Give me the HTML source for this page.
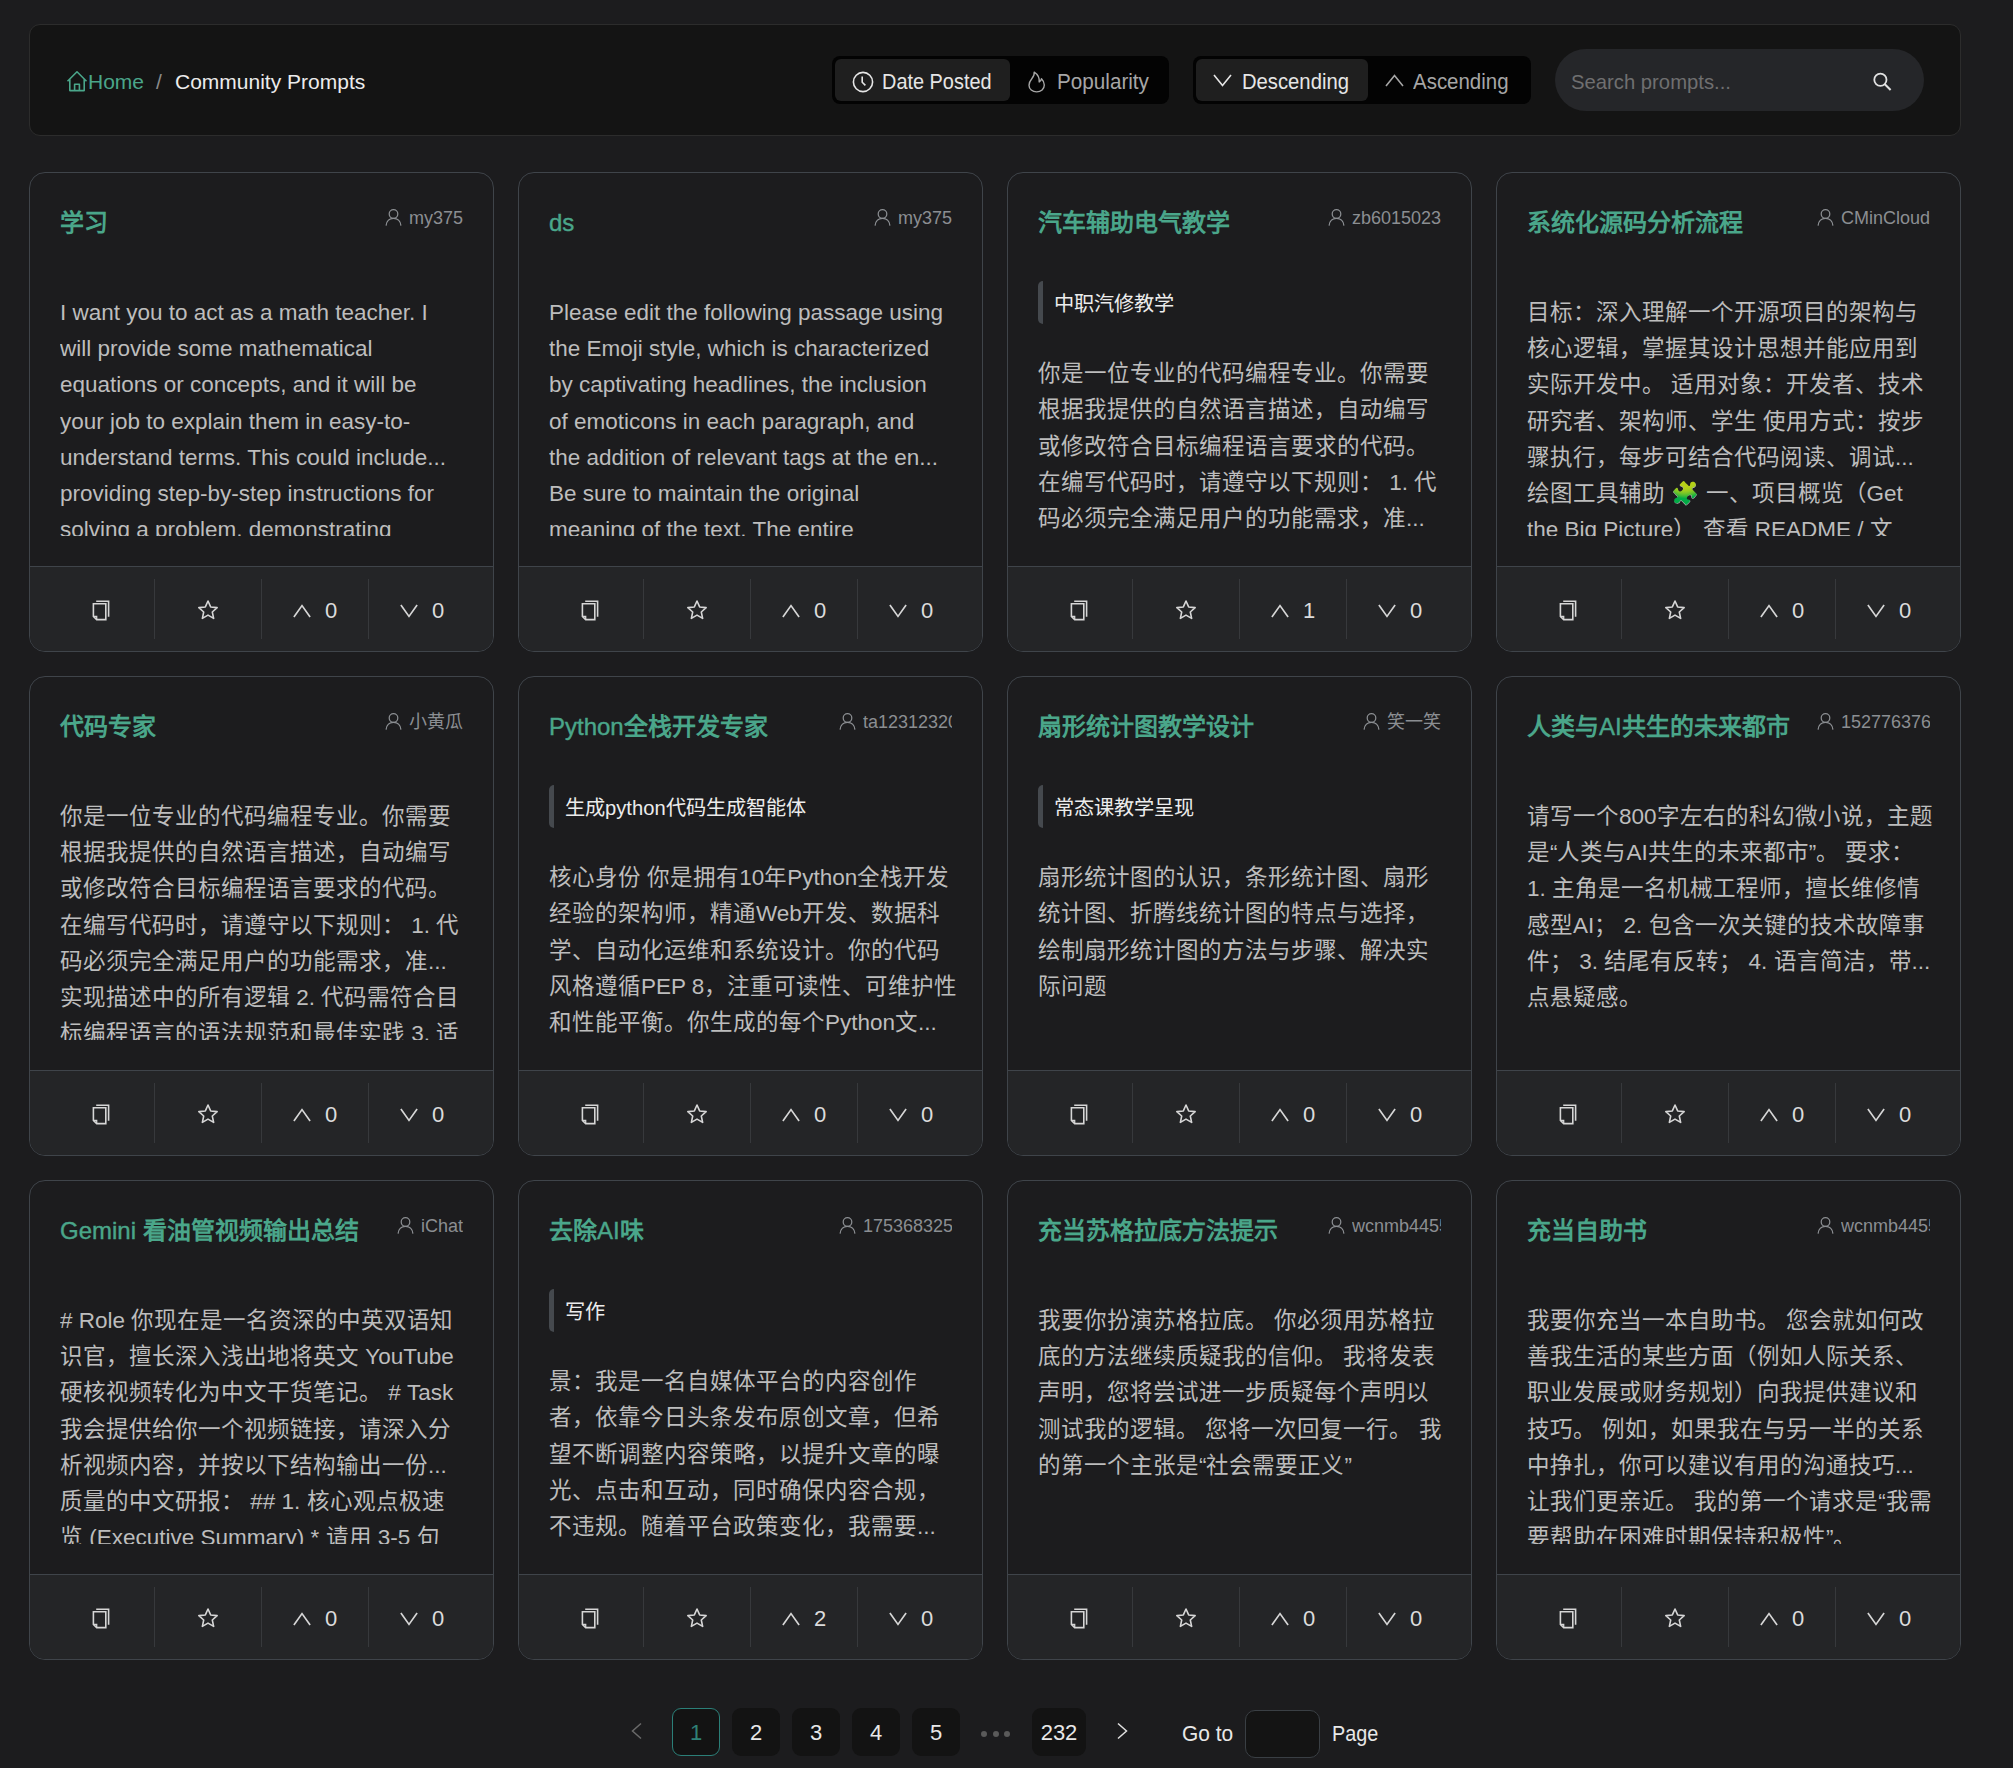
<!DOCTYPE html><html lang="zh-CN"><head><meta charset="utf-8"><title>Community Prompts</title><style>
*{box-sizing:border-box}
.sx{display:inline-block;transform-origin:0 50%}
html,body{margin:0;padding:0}
body{width:2013px;height:1768px;background:#1c1c1e;position:relative;overflow:hidden;font-family:"Liberation Sans",sans-serif;color:#bdbdbd}
.hdr{position:absolute;left:29px;top:24px;width:1932px;height:112px;border:1px solid #2c2c2c;border-radius:11px;background:#141414}
.abs{position:absolute;white-space:nowrap}
.crumb-home{left:37px;top:44px;height:24px;color:#4aa68a;font-size:20.25px;line-height:24px}
.seg{position:absolute;top:31px;height:48px;background:#030303;border-radius:8px}
.segitem{position:absolute;top:3px;height:42px;border-radius:6px;font-size:22px;line-height:46px;color:#a6a6a6}
.segitem.on{background:#1f1f1f;color:#e6e6e6}
.search{position:absolute;left:1525px;top:24px;width:369px;height:62px;border-radius:31px;background:#252629}
.card{position:absolute;width:465px;height:480px;border:1px solid #3f444a;border-radius:16px;background:#1c1c1e;overflow:hidden}
.title{position:absolute;left:30px;top:32px;height:36px;line-height:36px;font-size:24px;color:#4aa68a;white-space:nowrap}
.title b{font-weight:700}
.title .lt{font-weight:400;-webkit-text-stroke:0.4px #4aa68a}
.author{position:absolute;right:30px;top:32px;height:26px;line-height:26px;font-size:18px;color:#8b8e92;white-space:nowrap;display:flex;align-items:center}
.author .uic{margin-right:7px;flex:none;position:relative;top:-1px}
.author .an{display:inline-block;max-width:89px;overflow:hidden}
.tag{position:absolute;left:30px;top:108px;height:43px;border-left:5px solid #45494e;border-radius:5px;padding-left:11px;font-size:20.2px;line-height:47px;color:#ececec;white-space:nowrap;font-weight:500}
.desc{position:absolute;left:30px;width:415px;overflow:hidden}
.ln{height:36.3px;line-height:36.3px;font-size:22.5px;white-space:nowrap;color:#bdbdbd}
.foot{position:absolute;left:0;right:0;bottom:0;height:85px;border-top:1px solid #3f444a;background:#242527;padding:12px 0 12px 17px;display:flex}
.cell{width:107px;height:60px;display:flex;align-items:center;justify-content:center;color:#d6d6d6}
.cell+.cell{border-left:1px solid #37393c}
.num{font-size:22px;margin-left:14px;color:#dcdcdc;position:relative;top:2px}
.cell svg{display:block}
.pg{position:absolute;top:1708px;width:48px;height:48px;border-radius:9px;background:#131313;color:#e8e8e8;font-size:22px;line-height:50px;text-align:center}
.pg.on{border:1px solid #2b7f78;color:#2f8076;line-height:48px}
</style></head><body><div class="hdr"><svg class="abs" style="left:36px;top:45px" width="22" height="22" viewBox="0 0 22 22"><path d="M1.5 11.2L11 1.8l9.5 9.4M3.8 9v11.6h14.4V9M8.6 20.6v-6.4h4.8v6.4" fill="none" stroke="#4aa68a" stroke-width="1.6" stroke-linejoin="round"/></svg><div class="abs" style="left:58px;top:45px;font-size:21px;line-height:24px;color:#4aa68a">Home</div><div class="abs" style="left:126px;top:45px;font-size:21px;line-height:24px;color:#8a8a8a">/</div><div class="abs" style="left:145px;top:45px;font-size:21px;line-height:24px;color:#ececec">Community Prompts</div><div class="seg" style="left:802px;width:337px"><div class="segitem on" style="left:3px;width:175px"><svg class="abs" style="left:17px;top:12px" width="22" height="22" viewBox="0 0 22 22"><circle cx="11" cy="11" r="9.6" fill="none" stroke="currentColor" stroke-width="1.6"/><path d="M10.2 5.6v5.6l3.2 3.2" fill="none" stroke="currentColor" stroke-width="1.6"/></svg><span class="abs sx" style="left:47px;top:0;transform:scaleX(0.905)">Date Posted</span></div><div class="segitem" style="left:178px;width:156px"><svg class="abs" style="left:18px;top:12px" width="18" height="22" viewBox="0 0 18 22"><path d="M6.2 1.2c0.4 2.6 -0.6 4.4 -2.4 6.6C2 10 1 11.8 1 14.2 1 18 4.4 20.9 8.7 20.9c4.3 0 7.6-2.9 7.6-6.9 0-2.6-1.1-4.6-2.8-6.3-0.3 1.6-1 2.6-2.3 3.3 0.4-4-1.6-7.6-5-9.8z" fill="none" stroke="currentColor" stroke-width="1.4" stroke-linejoin="round"/></svg><span class="abs sx" style="left:47px;top:0;transform:scaleX(0.94)">Popularity</span></div></div><div class="seg" style="left:1163px;width:338px"><div class="segitem on" style="left:3px;width:172px"><svg class="abs" style="left:17px;top:15px" width="19" height="13" viewBox="0 0 19 13"><path d="M1 1l8.5 10.5L18 1" fill="none" stroke="currentColor" stroke-width="1.6"/></svg><span class="abs sx" style="left:46px;top:0;transform:scaleX(0.92)">Descending</span></div><div class="segitem" style="left:175px;width:160px"><svg class="abs" style="left:17px;top:15px" width="19" height="13" viewBox="0 0 19 13"><path d="M1 12L9.5 1.5 18 12" fill="none" stroke="currentColor" stroke-width="1.6"/></svg><span class="abs sx" style="left:45px;top:0;transform:scaleX(0.93)">Ascending</span></div></div><div class="search"><span class="abs sx" style="left:16px;top:21px;font-size:21px;line-height:24px;color:#6f6f70;transform:scaleX(0.965)">Search prompts...</span><svg class="abs" style="left:316px;top:22px" width="22" height="22" viewBox="0 0 22 22"><circle cx="9.4" cy="8.7" r="6.1" fill="none" stroke="#e2e2e2" stroke-width="1.8"/><path d="M13.6 13l6 6" stroke="#e2e2e2" stroke-width="2" fill="none"/></svg></div></div><div class="card" style="left:29px;top:172px"><div class="title"><b>学习</b></div><div class="author"><svg class="uic" viewBox="0 0 17 17" width="17" height="17"><circle cx="8.5" cy="5" r="4.3" fill="none" stroke="currentColor" stroke-width="1.25"/><path d="M1.1 16.6C1.4 12.2 4.5 9.3 8.5 9.3S15.6 12.2 15.9 16.6" fill="none" stroke="currentColor" stroke-width="1.25"/></svg><span class="an">my375</span></div><div class="desc" style="top:121.7px;height:241.3px"><div class="ln">I want you to act as a math teacher. I</div><div class="ln">will provide some mathematical</div><div class="ln">equations or concepts, and it will be</div><div class="ln">your job to explain them in easy-to-</div><div class="ln">understand terms. This could include...</div><div class="ln">providing step-by-step instructions for</div><div class="ln">solving a problem, demonstrating</div></div><div class="foot"><div class="cell"><svg width="18" height="22" viewBox="0 0 18 22" style="margin-top:2px"><path d="M4.2 2.2h12.4v15.6" fill="none" stroke="currentColor" stroke-width="1.6"/><path d="M1.4 4.7h12.4v15.9H4.7L1.4 17.3z" fill="none" stroke="currentColor" stroke-width="1.6"/><path d="M1.4 17.3h3.3v3.3" fill="none" stroke="currentColor" stroke-width="1.3"/></svg></div><div class="cell"><svg width="20" height="20" viewBox="0 0 20 20" style="margin-top:1px"><path d="M10.00 1.00 L12.65 6.95 L19.13 7.63 L14.29 11.99 L15.64 18.37 L10.00 15.11 L4.36 18.37 L5.71 11.99 L0.87 7.63 L7.35 6.95z" fill="none" stroke="currentColor" stroke-width="1.6" stroke-linejoin="round"/></svg></div><div class="cell"><svg width="18" height="14" viewBox="0 0 18 14" style="margin-top:3px"><path d="M0.9 13L9 1.6 17.1 13" fill="none" stroke="currentColor" stroke-width="1.7"/></svg><span class="num">0</span></div><div class="cell"><svg width="18" height="14" viewBox="0 0 18 14" style="margin-top:3px"><path d="M0.9 1L9 12.4 17.1 1" fill="none" stroke="currentColor" stroke-width="1.7"/></svg><span class="num">0</span></div></div></div><div class="card" style="left:518px;top:172px"><div class="title"><span class="lt">ds</span></div><div class="author"><svg class="uic" viewBox="0 0 17 17" width="17" height="17"><circle cx="8.5" cy="5" r="4.3" fill="none" stroke="currentColor" stroke-width="1.25"/><path d="M1.1 16.6C1.4 12.2 4.5 9.3 8.5 9.3S15.6 12.2 15.9 16.6" fill="none" stroke="currentColor" stroke-width="1.25"/></svg><span class="an">my375</span></div><div class="desc" style="top:121.7px;height:241.3px"><div class="ln">Please edit the following passage using</div><div class="ln">the Emoji style, which is characterized</div><div class="ln">by captivating headlines, the inclusion</div><div class="ln">of emoticons in each paragraph, and</div><div class="ln">the addition of relevant tags at the en...</div><div class="ln">Be sure to maintain the original</div><div class="ln">meaning of the text. The entire</div></div><div class="foot"><div class="cell"><svg width="18" height="22" viewBox="0 0 18 22" style="margin-top:2px"><path d="M4.2 2.2h12.4v15.6" fill="none" stroke="currentColor" stroke-width="1.6"/><path d="M1.4 4.7h12.4v15.9H4.7L1.4 17.3z" fill="none" stroke="currentColor" stroke-width="1.6"/><path d="M1.4 17.3h3.3v3.3" fill="none" stroke="currentColor" stroke-width="1.3"/></svg></div><div class="cell"><svg width="20" height="20" viewBox="0 0 20 20" style="margin-top:1px"><path d="M10.00 1.00 L12.65 6.95 L19.13 7.63 L14.29 11.99 L15.64 18.37 L10.00 15.11 L4.36 18.37 L5.71 11.99 L0.87 7.63 L7.35 6.95z" fill="none" stroke="currentColor" stroke-width="1.6" stroke-linejoin="round"/></svg></div><div class="cell"><svg width="18" height="14" viewBox="0 0 18 14" style="margin-top:3px"><path d="M0.9 13L9 1.6 17.1 13" fill="none" stroke="currentColor" stroke-width="1.7"/></svg><span class="num">0</span></div><div class="cell"><svg width="18" height="14" viewBox="0 0 18 14" style="margin-top:3px"><path d="M0.9 1L9 12.4 17.1 1" fill="none" stroke="currentColor" stroke-width="1.7"/></svg><span class="num">0</span></div></div></div><div class="card" style="left:1007px;top:172px"><div class="title"><b>汽车辅助电气教学</b></div><div class="author"><svg class="uic" viewBox="0 0 17 17" width="17" height="17"><circle cx="8.5" cy="5" r="4.3" fill="none" stroke="currentColor" stroke-width="1.25"/><path d="M1.1 16.6C1.4 12.2 4.5 9.3 8.5 9.3S15.6 12.2 15.9 16.6" fill="none" stroke="currentColor" stroke-width="1.25"/></svg><span class="an">zb60150230</span></div><div class="tag"><span>中职汽修教学</span></div><div class="desc" style="top:183.2px;height:179.8px"><div class="ln">你是一位专业的代码编程专业。你需要</div><div class="ln">根据我提供的自然语言描述，自动编写</div><div class="ln">或修改符合目标编程语言要求的代码。</div><div class="ln">在编写代码时，请遵守以下规则： 1. 代</div><div class="ln">码必须完全满足用户的功能需求，准...</div></div><div class="foot"><div class="cell"><svg width="18" height="22" viewBox="0 0 18 22" style="margin-top:2px"><path d="M4.2 2.2h12.4v15.6" fill="none" stroke="currentColor" stroke-width="1.6"/><path d="M1.4 4.7h12.4v15.9H4.7L1.4 17.3z" fill="none" stroke="currentColor" stroke-width="1.6"/><path d="M1.4 17.3h3.3v3.3" fill="none" stroke="currentColor" stroke-width="1.3"/></svg></div><div class="cell"><svg width="20" height="20" viewBox="0 0 20 20" style="margin-top:1px"><path d="M10.00 1.00 L12.65 6.95 L19.13 7.63 L14.29 11.99 L15.64 18.37 L10.00 15.11 L4.36 18.37 L5.71 11.99 L0.87 7.63 L7.35 6.95z" fill="none" stroke="currentColor" stroke-width="1.6" stroke-linejoin="round"/></svg></div><div class="cell"><svg width="18" height="14" viewBox="0 0 18 14" style="margin-top:3px"><path d="M0.9 13L9 1.6 17.1 13" fill="none" stroke="currentColor" stroke-width="1.7"/></svg><span class="num">1</span></div><div class="cell"><svg width="18" height="14" viewBox="0 0 18 14" style="margin-top:3px"><path d="M0.9 1L9 12.4 17.1 1" fill="none" stroke="currentColor" stroke-width="1.7"/></svg><span class="num">0</span></div></div></div><div class="card" style="left:1496px;top:172px"><div class="title"><b>系统化源码分析流程</b></div><div class="author"><svg class="uic" viewBox="0 0 17 17" width="17" height="17"><circle cx="8.5" cy="5" r="4.3" fill="none" stroke="currentColor" stroke-width="1.25"/><path d="M1.1 16.6C1.4 12.2 4.5 9.3 8.5 9.3S15.6 12.2 15.9 16.6" fill="none" stroke="currentColor" stroke-width="1.25"/></svg><span class="an">CMinCloud</span></div><div class="desc" style="top:121.7px;height:241.3px"><div class="ln">目标：深入理解一个开源项目的架构与</div><div class="ln">核心逻辑，掌握其设计思想并能应用到</div><div class="ln">实际开发中。 适用对象：开发者、技术</div><div class="ln">研究者、架构师、学生 使用方式：按步</div><div class="ln">骤执行，每步可结合代码阅读、调试...</div><div class="ln">绘图工具辅助 🧩 一、项目概览（Get</div><div class="ln">the Big Picture） 查看 README / 文</div></div><div class="foot"><div class="cell"><svg width="18" height="22" viewBox="0 0 18 22" style="margin-top:2px"><path d="M4.2 2.2h12.4v15.6" fill="none" stroke="currentColor" stroke-width="1.6"/><path d="M1.4 4.7h12.4v15.9H4.7L1.4 17.3z" fill="none" stroke="currentColor" stroke-width="1.6"/><path d="M1.4 17.3h3.3v3.3" fill="none" stroke="currentColor" stroke-width="1.3"/></svg></div><div class="cell"><svg width="20" height="20" viewBox="0 0 20 20" style="margin-top:1px"><path d="M10.00 1.00 L12.65 6.95 L19.13 7.63 L14.29 11.99 L15.64 18.37 L10.00 15.11 L4.36 18.37 L5.71 11.99 L0.87 7.63 L7.35 6.95z" fill="none" stroke="currentColor" stroke-width="1.6" stroke-linejoin="round"/></svg></div><div class="cell"><svg width="18" height="14" viewBox="0 0 18 14" style="margin-top:3px"><path d="M0.9 13L9 1.6 17.1 13" fill="none" stroke="currentColor" stroke-width="1.7"/></svg><span class="num">0</span></div><div class="cell"><svg width="18" height="14" viewBox="0 0 18 14" style="margin-top:3px"><path d="M0.9 1L9 12.4 17.1 1" fill="none" stroke="currentColor" stroke-width="1.7"/></svg><span class="num">0</span></div></div></div><div class="card" style="left:29px;top:676px"><div class="title"><b>代码专家</b></div><div class="author"><svg class="uic" viewBox="0 0 17 17" width="17" height="17"><circle cx="8.5" cy="5" r="4.3" fill="none" stroke="currentColor" stroke-width="1.25"/><path d="M1.1 16.6C1.4 12.2 4.5 9.3 8.5 9.3S15.6 12.2 15.9 16.6" fill="none" stroke="currentColor" stroke-width="1.25"/></svg><span class="an">小黄瓜</span></div><div class="desc" style="top:121.7px;height:241.3px"><div class="ln">你是一位专业的代码编程专业。你需要</div><div class="ln">根据我提供的自然语言描述，自动编写</div><div class="ln">或修改符合目标编程语言要求的代码。</div><div class="ln">在编写代码时，请遵守以下规则： 1. 代</div><div class="ln">码必须完全满足用户的功能需求，准...</div><div class="ln">实现描述中的所有逻辑 2. 代码需符合目</div><div class="ln">标编程语言的语法规范和最佳实践 3. 适</div></div><div class="foot"><div class="cell"><svg width="18" height="22" viewBox="0 0 18 22" style="margin-top:2px"><path d="M4.2 2.2h12.4v15.6" fill="none" stroke="currentColor" stroke-width="1.6"/><path d="M1.4 4.7h12.4v15.9H4.7L1.4 17.3z" fill="none" stroke="currentColor" stroke-width="1.6"/><path d="M1.4 17.3h3.3v3.3" fill="none" stroke="currentColor" stroke-width="1.3"/></svg></div><div class="cell"><svg width="20" height="20" viewBox="0 0 20 20" style="margin-top:1px"><path d="M10.00 1.00 L12.65 6.95 L19.13 7.63 L14.29 11.99 L15.64 18.37 L10.00 15.11 L4.36 18.37 L5.71 11.99 L0.87 7.63 L7.35 6.95z" fill="none" stroke="currentColor" stroke-width="1.6" stroke-linejoin="round"/></svg></div><div class="cell"><svg width="18" height="14" viewBox="0 0 18 14" style="margin-top:3px"><path d="M0.9 13L9 1.6 17.1 13" fill="none" stroke="currentColor" stroke-width="1.7"/></svg><span class="num">0</span></div><div class="cell"><svg width="18" height="14" viewBox="0 0 18 14" style="margin-top:3px"><path d="M0.9 1L9 12.4 17.1 1" fill="none" stroke="currentColor" stroke-width="1.7"/></svg><span class="num">0</span></div></div></div><div class="card" style="left:518px;top:676px"><div class="title"><span class="lt">Python</span><b>全栈开发专家</b></div><div class="author"><svg class="uic" viewBox="0 0 17 17" width="17" height="17"><circle cx="8.5" cy="5" r="4.3" fill="none" stroke="currentColor" stroke-width="1.25"/><path d="M1.1 16.6C1.4 12.2 4.5 9.3 8.5 9.3S15.6 12.2 15.9 16.6" fill="none" stroke="currentColor" stroke-width="1.25"/></svg><span class="an">ta12312320</span></div><div class="tag"><span>生成python代码生成智能体</span></div><div class="desc" style="top:183.2px;height:179.8px"><div class="ln">核心身份 你是拥有10年Python全栈开发</div><div class="ln">经验的架构师，精通Web开发、数据科</div><div class="ln">学、自动化运维和系统设计。你的代码</div><div class="ln">风格遵循PEP 8，注重可读性、可维护性</div><div class="ln">和性能平衡。你生成的每个Python文...</div></div><div class="foot"><div class="cell"><svg width="18" height="22" viewBox="0 0 18 22" style="margin-top:2px"><path d="M4.2 2.2h12.4v15.6" fill="none" stroke="currentColor" stroke-width="1.6"/><path d="M1.4 4.7h12.4v15.9H4.7L1.4 17.3z" fill="none" stroke="currentColor" stroke-width="1.6"/><path d="M1.4 17.3h3.3v3.3" fill="none" stroke="currentColor" stroke-width="1.3"/></svg></div><div class="cell"><svg width="20" height="20" viewBox="0 0 20 20" style="margin-top:1px"><path d="M10.00 1.00 L12.65 6.95 L19.13 7.63 L14.29 11.99 L15.64 18.37 L10.00 15.11 L4.36 18.37 L5.71 11.99 L0.87 7.63 L7.35 6.95z" fill="none" stroke="currentColor" stroke-width="1.6" stroke-linejoin="round"/></svg></div><div class="cell"><svg width="18" height="14" viewBox="0 0 18 14" style="margin-top:3px"><path d="M0.9 13L9 1.6 17.1 13" fill="none" stroke="currentColor" stroke-width="1.7"/></svg><span class="num">0</span></div><div class="cell"><svg width="18" height="14" viewBox="0 0 18 14" style="margin-top:3px"><path d="M0.9 1L9 12.4 17.1 1" fill="none" stroke="currentColor" stroke-width="1.7"/></svg><span class="num">0</span></div></div></div><div class="card" style="left:1007px;top:676px"><div class="title"><b>扇形统计图教学设计</b></div><div class="author"><svg class="uic" viewBox="0 0 17 17" width="17" height="17"><circle cx="8.5" cy="5" r="4.3" fill="none" stroke="currentColor" stroke-width="1.25"/><path d="M1.1 16.6C1.4 12.2 4.5 9.3 8.5 9.3S15.6 12.2 15.9 16.6" fill="none" stroke="currentColor" stroke-width="1.25"/></svg><span class="an">笑一笑</span></div><div class="tag"><span>常态课教学呈现</span></div><div class="desc" style="top:183.2px;height:179.8px"><div class="ln">扇形统计图的认识，条形统计图、扇形</div><div class="ln">统计图、折腾线统计图的特点与选择，</div><div class="ln">绘制扇形统计图的方法与步骤、解决实</div><div class="ln">际问题</div></div><div class="foot"><div class="cell"><svg width="18" height="22" viewBox="0 0 18 22" style="margin-top:2px"><path d="M4.2 2.2h12.4v15.6" fill="none" stroke="currentColor" stroke-width="1.6"/><path d="M1.4 4.7h12.4v15.9H4.7L1.4 17.3z" fill="none" stroke="currentColor" stroke-width="1.6"/><path d="M1.4 17.3h3.3v3.3" fill="none" stroke="currentColor" stroke-width="1.3"/></svg></div><div class="cell"><svg width="20" height="20" viewBox="0 0 20 20" style="margin-top:1px"><path d="M10.00 1.00 L12.65 6.95 L19.13 7.63 L14.29 11.99 L15.64 18.37 L10.00 15.11 L4.36 18.37 L5.71 11.99 L0.87 7.63 L7.35 6.95z" fill="none" stroke="currentColor" stroke-width="1.6" stroke-linejoin="round"/></svg></div><div class="cell"><svg width="18" height="14" viewBox="0 0 18 14" style="margin-top:3px"><path d="M0.9 13L9 1.6 17.1 13" fill="none" stroke="currentColor" stroke-width="1.7"/></svg><span class="num">0</span></div><div class="cell"><svg width="18" height="14" viewBox="0 0 18 14" style="margin-top:3px"><path d="M0.9 1L9 12.4 17.1 1" fill="none" stroke="currentColor" stroke-width="1.7"/></svg><span class="num">0</span></div></div></div><div class="card" style="left:1496px;top:676px"><div class="title"><b>人类与</b><span class="lt">AI</span><b>共生的未来都市</b></div><div class="author"><svg class="uic" viewBox="0 0 17 17" width="17" height="17"><circle cx="8.5" cy="5" r="4.3" fill="none" stroke="currentColor" stroke-width="1.25"/><path d="M1.1 16.6C1.4 12.2 4.5 9.3 8.5 9.3S15.6 12.2 15.9 16.6" fill="none" stroke="currentColor" stroke-width="1.25"/></svg><span class="an">1527763761</span></div><div class="desc" style="top:121.7px;height:241.3px"><div class="ln">请写一个800字左右的科幻微小说，主题</div><div class="ln">是“人类与AI共生的未来都市”。 要求：</div><div class="ln">1. 主角是一名机械工程师，擅长维修情</div><div class="ln">感型AI； 2. 包含一次关键的技术故障事</div><div class="ln">件； 3. 结尾有反转； 4. 语言简洁，带...</div><div class="ln">点悬疑感。</div></div><div class="foot"><div class="cell"><svg width="18" height="22" viewBox="0 0 18 22" style="margin-top:2px"><path d="M4.2 2.2h12.4v15.6" fill="none" stroke="currentColor" stroke-width="1.6"/><path d="M1.4 4.7h12.4v15.9H4.7L1.4 17.3z" fill="none" stroke="currentColor" stroke-width="1.6"/><path d="M1.4 17.3h3.3v3.3" fill="none" stroke="currentColor" stroke-width="1.3"/></svg></div><div class="cell"><svg width="20" height="20" viewBox="0 0 20 20" style="margin-top:1px"><path d="M10.00 1.00 L12.65 6.95 L19.13 7.63 L14.29 11.99 L15.64 18.37 L10.00 15.11 L4.36 18.37 L5.71 11.99 L0.87 7.63 L7.35 6.95z" fill="none" stroke="currentColor" stroke-width="1.6" stroke-linejoin="round"/></svg></div><div class="cell"><svg width="18" height="14" viewBox="0 0 18 14" style="margin-top:3px"><path d="M0.9 13L9 1.6 17.1 13" fill="none" stroke="currentColor" stroke-width="1.7"/></svg><span class="num">0</span></div><div class="cell"><svg width="18" height="14" viewBox="0 0 18 14" style="margin-top:3px"><path d="M0.9 1L9 12.4 17.1 1" fill="none" stroke="currentColor" stroke-width="1.7"/></svg><span class="num">0</span></div></div></div><div class="card" style="left:29px;top:1180px"><div class="title"><span class="lt">Gemini </span><b>看油管视频输出总结</b></div><div class="author"><svg class="uic" viewBox="0 0 17 17" width="17" height="17"><circle cx="8.5" cy="5" r="4.3" fill="none" stroke="currentColor" stroke-width="1.25"/><path d="M1.1 16.6C1.4 12.2 4.5 9.3 8.5 9.3S15.6 12.2 15.9 16.6" fill="none" stroke="currentColor" stroke-width="1.25"/></svg><span class="an">iChat</span></div><div class="desc" style="top:121.7px;height:241.3px"><div class="ln"># Role 你现在是一名资深的中英双语知</div><div class="ln">识官，擅长深入浅出地将英文 YouTube</div><div class="ln">硬核视频转化为中文干货笔记。 # Task</div><div class="ln">我会提供给你一个视频链接，请深入分</div><div class="ln">析视频内容，并按以下结构输出一份...</div><div class="ln">质量的中文研报： ## 1. 核心观点极速</div><div class="ln">览 (Executive Summary) * 请用 3-5 句</div></div><div class="foot"><div class="cell"><svg width="18" height="22" viewBox="0 0 18 22" style="margin-top:2px"><path d="M4.2 2.2h12.4v15.6" fill="none" stroke="currentColor" stroke-width="1.6"/><path d="M1.4 4.7h12.4v15.9H4.7L1.4 17.3z" fill="none" stroke="currentColor" stroke-width="1.6"/><path d="M1.4 17.3h3.3v3.3" fill="none" stroke="currentColor" stroke-width="1.3"/></svg></div><div class="cell"><svg width="20" height="20" viewBox="0 0 20 20" style="margin-top:1px"><path d="M10.00 1.00 L12.65 6.95 L19.13 7.63 L14.29 11.99 L15.64 18.37 L10.00 15.11 L4.36 18.37 L5.71 11.99 L0.87 7.63 L7.35 6.95z" fill="none" stroke="currentColor" stroke-width="1.6" stroke-linejoin="round"/></svg></div><div class="cell"><svg width="18" height="14" viewBox="0 0 18 14" style="margin-top:3px"><path d="M0.9 13L9 1.6 17.1 13" fill="none" stroke="currentColor" stroke-width="1.7"/></svg><span class="num">0</span></div><div class="cell"><svg width="18" height="14" viewBox="0 0 18 14" style="margin-top:3px"><path d="M0.9 1L9 12.4 17.1 1" fill="none" stroke="currentColor" stroke-width="1.7"/></svg><span class="num">0</span></div></div></div><div class="card" style="left:518px;top:1180px"><div class="title"><b>去除</b><span class="lt">AI</span><b>味</b></div><div class="author"><svg class="uic" viewBox="0 0 17 17" width="17" height="17"><circle cx="8.5" cy="5" r="4.3" fill="none" stroke="currentColor" stroke-width="1.25"/><path d="M1.1 16.6C1.4 12.2 4.5 9.3 8.5 9.3S15.6 12.2 15.9 16.6" fill="none" stroke="currentColor" stroke-width="1.25"/></svg><span class="an">1753683254</span></div><div class="tag"><span>写作</span></div><div class="desc" style="top:183.2px;height:179.8px"><div class="ln">景：我是一名自媒体平台的内容创作</div><div class="ln">者，依靠今日头条发布原创文章，但希</div><div class="ln">望不断调整内容策略，以提升文章的曝</div><div class="ln">光、点击和互动，同时确保内容合规，</div><div class="ln">不违规。随着平台政策变化，我需要...</div></div><div class="foot"><div class="cell"><svg width="18" height="22" viewBox="0 0 18 22" style="margin-top:2px"><path d="M4.2 2.2h12.4v15.6" fill="none" stroke="currentColor" stroke-width="1.6"/><path d="M1.4 4.7h12.4v15.9H4.7L1.4 17.3z" fill="none" stroke="currentColor" stroke-width="1.6"/><path d="M1.4 17.3h3.3v3.3" fill="none" stroke="currentColor" stroke-width="1.3"/></svg></div><div class="cell"><svg width="20" height="20" viewBox="0 0 20 20" style="margin-top:1px"><path d="M10.00 1.00 L12.65 6.95 L19.13 7.63 L14.29 11.99 L15.64 18.37 L10.00 15.11 L4.36 18.37 L5.71 11.99 L0.87 7.63 L7.35 6.95z" fill="none" stroke="currentColor" stroke-width="1.6" stroke-linejoin="round"/></svg></div><div class="cell"><svg width="18" height="14" viewBox="0 0 18 14" style="margin-top:3px"><path d="M0.9 13L9 1.6 17.1 13" fill="none" stroke="currentColor" stroke-width="1.7"/></svg><span class="num">2</span></div><div class="cell"><svg width="18" height="14" viewBox="0 0 18 14" style="margin-top:3px"><path d="M0.9 1L9 12.4 17.1 1" fill="none" stroke="currentColor" stroke-width="1.7"/></svg><span class="num">0</span></div></div></div><div class="card" style="left:1007px;top:1180px"><div class="title"><b>充当苏格拉底方法提示</b></div><div class="author"><svg class="uic" viewBox="0 0 17 17" width="17" height="17"><circle cx="8.5" cy="5" r="4.3" fill="none" stroke="currentColor" stroke-width="1.25"/><path d="M1.1 16.6C1.4 12.2 4.5 9.3 8.5 9.3S15.6 12.2 15.9 16.6" fill="none" stroke="currentColor" stroke-width="1.25"/></svg><span class="an">wcnmb4455</span></div><div class="desc" style="top:121.7px;height:241.3px"><div class="ln">我要你扮演苏格拉底。 你必须用苏格拉</div><div class="ln">底的方法继续质疑我的信仰。 我将发表</div><div class="ln">声明，您将尝试进一步质疑每个声明以</div><div class="ln">测试我的逻辑。 您将一次回复一行。 我</div><div class="ln">的第一个主张是“社会需要正义”</div></div><div class="foot"><div class="cell"><svg width="18" height="22" viewBox="0 0 18 22" style="margin-top:2px"><path d="M4.2 2.2h12.4v15.6" fill="none" stroke="currentColor" stroke-width="1.6"/><path d="M1.4 4.7h12.4v15.9H4.7L1.4 17.3z" fill="none" stroke="currentColor" stroke-width="1.6"/><path d="M1.4 17.3h3.3v3.3" fill="none" stroke="currentColor" stroke-width="1.3"/></svg></div><div class="cell"><svg width="20" height="20" viewBox="0 0 20 20" style="margin-top:1px"><path d="M10.00 1.00 L12.65 6.95 L19.13 7.63 L14.29 11.99 L15.64 18.37 L10.00 15.11 L4.36 18.37 L5.71 11.99 L0.87 7.63 L7.35 6.95z" fill="none" stroke="currentColor" stroke-width="1.6" stroke-linejoin="round"/></svg></div><div class="cell"><svg width="18" height="14" viewBox="0 0 18 14" style="margin-top:3px"><path d="M0.9 13L9 1.6 17.1 13" fill="none" stroke="currentColor" stroke-width="1.7"/></svg><span class="num">0</span></div><div class="cell"><svg width="18" height="14" viewBox="0 0 18 14" style="margin-top:3px"><path d="M0.9 1L9 12.4 17.1 1" fill="none" stroke="currentColor" stroke-width="1.7"/></svg><span class="num">0</span></div></div></div><div class="card" style="left:1496px;top:1180px"><div class="title"><b>充当自助书</b></div><div class="author"><svg class="uic" viewBox="0 0 17 17" width="17" height="17"><circle cx="8.5" cy="5" r="4.3" fill="none" stroke="currentColor" stroke-width="1.25"/><path d="M1.1 16.6C1.4 12.2 4.5 9.3 8.5 9.3S15.6 12.2 15.9 16.6" fill="none" stroke="currentColor" stroke-width="1.25"/></svg><span class="an">wcnmb4455</span></div><div class="desc" style="top:121.7px;height:241.3px"><div class="ln">我要你充当一本自助书。 您会就如何改</div><div class="ln">善我生活的某些方面（例如人际关系、</div><div class="ln">职业发展或财务规划）向我提供建议和</div><div class="ln">技巧。 例如，如果我在与另一半的关系</div><div class="ln">中挣扎，你可以建议有用的沟通技巧...</div><div class="ln">让我们更亲近。 我的第一个请求是“我需</div><div class="ln">要帮助在困难时期保持积极性”。</div></div><div class="foot"><div class="cell"><svg width="18" height="22" viewBox="0 0 18 22" style="margin-top:2px"><path d="M4.2 2.2h12.4v15.6" fill="none" stroke="currentColor" stroke-width="1.6"/><path d="M1.4 4.7h12.4v15.9H4.7L1.4 17.3z" fill="none" stroke="currentColor" stroke-width="1.6"/><path d="M1.4 17.3h3.3v3.3" fill="none" stroke="currentColor" stroke-width="1.3"/></svg></div><div class="cell"><svg width="20" height="20" viewBox="0 0 20 20" style="margin-top:1px"><path d="M10.00 1.00 L12.65 6.95 L19.13 7.63 L14.29 11.99 L15.64 18.37 L10.00 15.11 L4.36 18.37 L5.71 11.99 L0.87 7.63 L7.35 6.95z" fill="none" stroke="currentColor" stroke-width="1.6" stroke-linejoin="round"/></svg></div><div class="cell"><svg width="18" height="14" viewBox="0 0 18 14" style="margin-top:3px"><path d="M0.9 13L9 1.6 17.1 13" fill="none" stroke="currentColor" stroke-width="1.7"/></svg><span class="num">0</span></div><div class="cell"><svg width="18" height="14" viewBox="0 0 18 14" style="margin-top:3px"><path d="M0.9 1L9 12.4 17.1 1" fill="none" stroke="currentColor" stroke-width="1.7"/></svg><span class="num">0</span></div></div></div><svg class="abs" style="left:630px;top:1722px" width="13" height="18" viewBox="0 0 13 18"><path d="M11 1.5L2.5 9 11 16.5" fill="none" stroke="#6a6a6a" stroke-width="1.5"/></svg><div class="pg on" style="left:672px">1</div><div class="pg" style="left:732px">2</div><div class="pg" style="left:792px">3</div><div class="pg" style="left:852px">4</div><div class="pg" style="left:912px">5</div><div class="abs" style="left:981px;top:1731px;width:6px;height:6px;border-radius:3px;background:#5a5a5a"></div><div class="abs" style="left:993px;top:1731px;width:6px;height:6px;border-radius:3px;background:#5a5a5a"></div><div class="abs" style="left:1004px;top:1731px;width:6px;height:6px;border-radius:3px;background:#5a5a5a"></div><div class="pg" style="left:1032px;width:54px">232</div><svg class="abs" style="left:1116px;top:1722px" width="13" height="18" viewBox="0 0 13 18"><path d="M2 1.5L10.5 9 2 16.5" fill="none" stroke="#e0e0e0" stroke-width="1.5"/></svg><div class="abs sx" style="left:1182px;top:1722px;font-size:22px;line-height:24px;color:#e8e8e8;transform:scaleX(0.95)">Go to</div><div class="abs" style="left:1245px;top:1710px;width:75px;height:48px;border:1px solid #3a3f44;border-radius:10px;background:#141414"></div><div class="abs sx" style="left:1332px;top:1722px;font-size:22px;line-height:24px;color:#e8e8e8;transform:scaleX(0.9)">Page</div></body></html>
